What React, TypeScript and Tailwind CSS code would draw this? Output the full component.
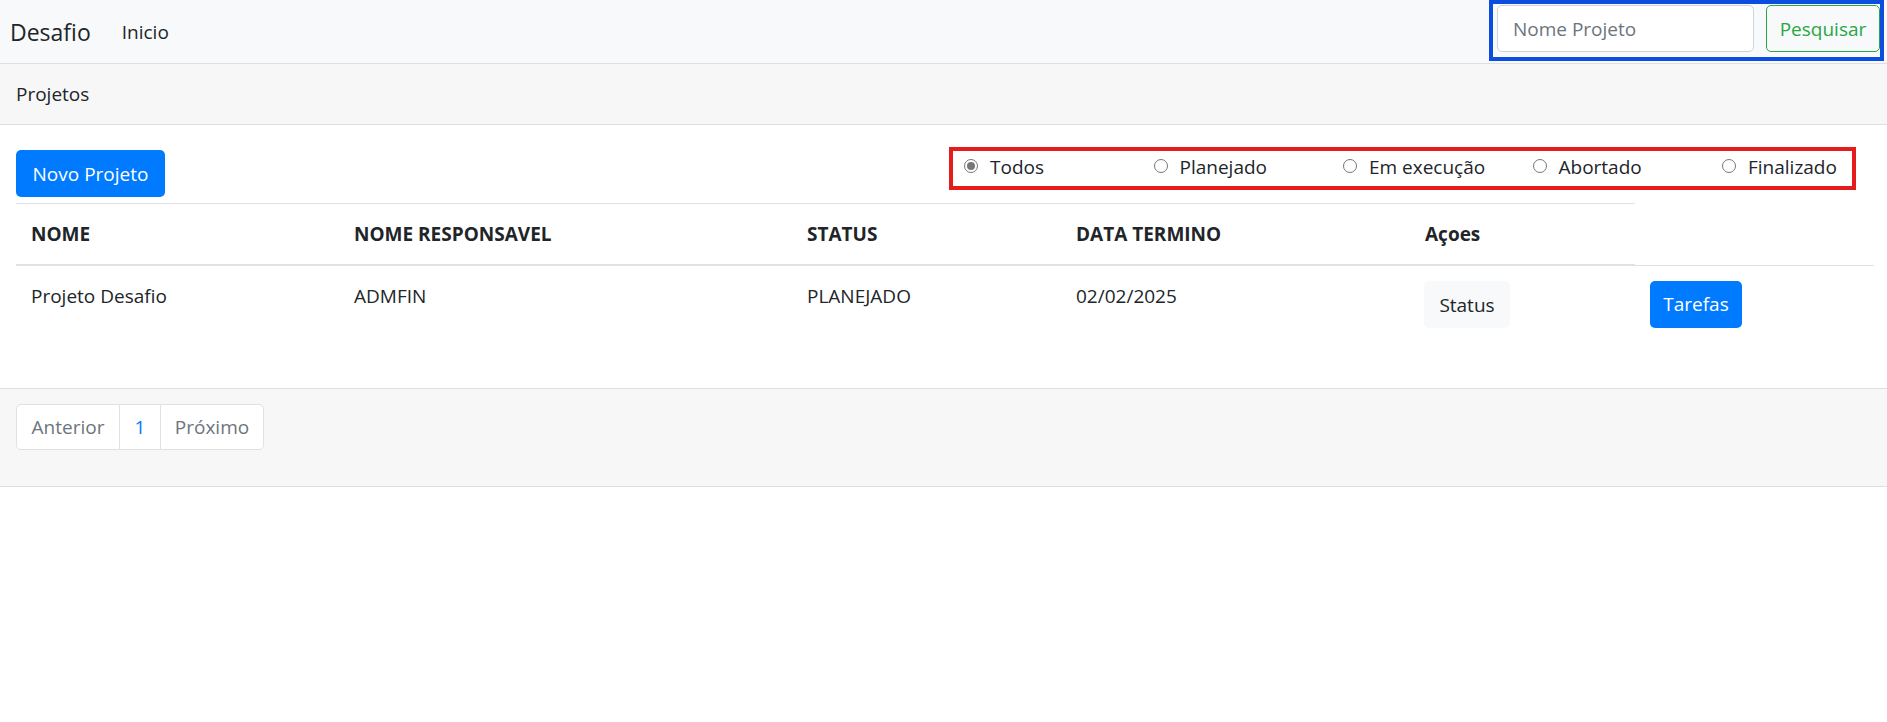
import React, { useState } from 'react';

const statusOptions = ['Todos', 'Planejado', 'Em execução', 'Abortado', 'Finalizado'];

const projects = [
  { nome: 'Projeto Desafio', responsavel: 'ADMFIN', status: 'PLANEJADO', termino: '02/02/2025' },
];

export default function App() {
  const [filter, setFilter] = useState('Todos');
  const [busca, setBusca] = useState('');

  return (
    <div className="min-h-[722px] bg-white text-[19px] leading-[30px] text-[#212529] font-['Open_Sans',sans-serif]">
      {/* Navbar */}
      <nav className="flex h-[64px] items-start border-b border-[#dfdfdf] bg-[#f8f9fa]">
        <div className="flex h-[63px] items-center pl-[10px]">
          <span className="text-[23px] leading-[30px] text-[#212529]">Desafio</span>
          <a className="ml-[31px] text-[19px] text-[#212529]">Inicio</a>
        </div>

        {/* Search */}
        <div className="ml-auto mr-[3px] flex h-[61px] w-[395px] items-start gap-[12px] border-4 border-[#0a4ddf] pl-[4px] pt-[1px]">
          <input
            value={busca}
            onChange={(e) => setBusca(e.target.value)}
            placeholder="Nome Projeto"
            className="h-[47px] w-[257px] rounded-[5px] border border-[#ced4da] bg-white px-[15px] text-[19px] text-[#495057] outline-none placeholder:text-[#6c757d]"
          />
          <button className="h-[47px] w-[114px] rounded-[5px] border border-[#28a745] text-[19px] text-[#28a745]">
            Pesquisar
          </button>
        </div>
      </nav>

      {/* Card header */}
      <div className="flex h-[61px] items-center border-b border-[#dfdfdf] bg-[#f7f7f7] pl-[16px]">
        <span>Projetos</span>
      </div>

      {/* Card body */}
      <div className="pb-[45px] pl-[16px] pr-[13px]">
        <div className="flex items-start">
          <button className="mt-[25px] h-[47px] w-[149px] rounded-[5px] bg-[#007bff] text-[19px] text-white">
            Novo Projeto
          </button>

          <div className="ml-auto mr-[18px] mt-[22px] flex h-[43px] w-[907px] items-start border-4 border-[#e51c1c] pl-[11px] pt-[1px]">
            {statusOptions.map((opt) => (
              <label
                key={opt}
                onClick={() => setFilter(opt)}
                className="flex w-[189.5px] shrink-0 cursor-pointer items-center gap-[12px]"
              >
                <span className="-mt-[2px] flex h-[14px] w-[14px] items-center justify-center rounded-full border border-[#767676] bg-white">
                  {filter === opt && <span className="h-[8px] w-[8px] rounded-full bg-[#777777]" />}
                </span>
                <span>{opt}</span>
              </label>
            ))}
          </div>
        </div>

        <table className="mt-[6px] w-[1858px] table-fixed border-collapse text-left">
          <colgroup>
            <col className="w-[323px]" />
            <col className="w-[453px]" />
            <col className="w-[269px]" />
            <col className="w-[349px]" />
            <col className="w-[225px]" />
            <col className="w-[239px]" />
          </colgroup>
          <thead>
            <tr>
              <th className="border-t border-b-2 border-[#dee2e6] p-[15px] font-bold">NOME</th>
              <th className="border-t border-b-2 border-[#dee2e6] p-[15px] font-bold">NOME RESPONSAVEL</th>
              <th className="border-t border-b-2 border-[#dee2e6] p-[15px] font-bold">STATUS</th>
              <th className="border-t border-b-2 border-[#dee2e6] p-[15px] font-bold">DATA TERMINO</th>
              <th className="border-t border-b-2 border-[#dee2e6] p-[15px] font-bold">Açoes</th>
            </tr>
          </thead>
          <tbody>
            {projects.map((p) => (
              <tr key={p.nome} className="align-top">
                <td className="border-t border-[#dee2e6] p-[15px]">{p.nome}</td>
                <td className="border-t border-[#dee2e6] p-[15px]">{p.responsavel}</td>
                <td className="border-t border-[#dee2e6] p-[15px]">{p.status}</td>
                <td className="border-t border-[#dee2e6] p-[15px]">{p.termino}</td>
                <td className="border-t border-[#dee2e6] px-[14px] py-[15px]">
                  <button className="h-[47px] w-[86px] rounded-[5px] bg-[#f8f9fa] text-[19px] text-[#212529]">Status</button>
                </td>
                <td className="border-t border-[#dee2e6] px-[15px] py-[15px]">
                  <button className="h-[47px] w-[92px] rounded-[5px] bg-[#007bff] text-[19px] text-white">Tarefas</button>
                </td>
              </tr>
            ))}
          </tbody>
        </table>
      </div>

      {/* Card footer */}
      <div className="h-[99px] border-y border-[#dfdfdf] bg-[#f7f7f7] pl-[16px] pt-[15px]">
        <ul className="flex h-[46px] w-fit rounded-[5px] border border-[#dee2e6] bg-white text-[#6c757d]">
          <li className="flex w-[102px] items-center justify-center">Anterior</li>
          <li className="flex w-[41px] items-center justify-center border-l border-[#dee2e6] text-[#007bff]">1</li>
          <li className="flex w-[103px] items-center justify-center border-l border-[#dee2e6]">Próximo</li>
        </ul>
      </div>
    </div>
  );
}
